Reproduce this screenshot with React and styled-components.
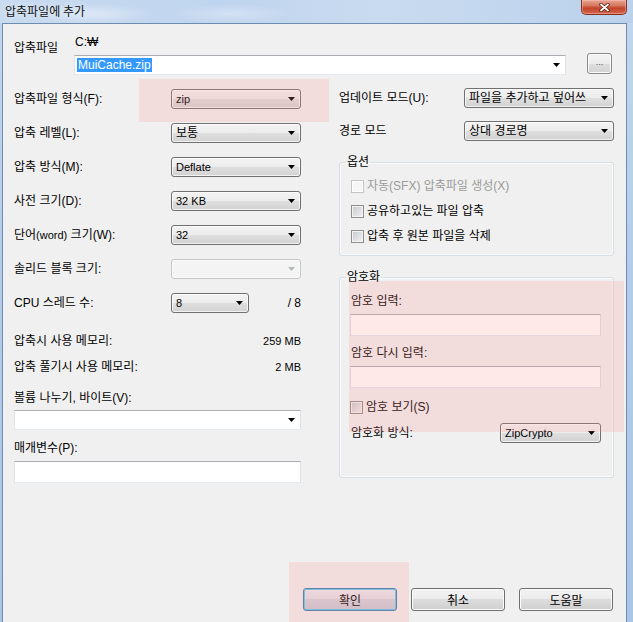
import React from 'react';
import styled, { createGlobalStyle } from 'styled-components';

const GlobalStyle = createGlobalStyle`
  html, body {
    margin: 0;
    padding: 0;
    overflow: hidden;
    background: #bcd3ee;
  }
`;

const uiFont = `"Liberation Sans", "Noto Sans CJK KR", sans-serif`;

const Window = styled.div`
  position: relative;
  width: 633px;
  height: 622px;
  overflow: hidden;
  display: flex;
  flex-direction: column;
  background: linear-gradient(to bottom, #c3d7ee 0%, #b4cdea 40%, #a9c5e7 100%);
  font-family: ${uiFont};
  font-size: 12px;
  line-height: 14px;
  color: #000;
`;

const TitleBar = styled.div`
  height: 23px;
  flex-shrink: 0;
  display: flex;
  align-items: flex-start;
  background:
    radial-gradient(ellipse 60px 10px at 95px 14px, rgba(230, 238, 248, 0.7), transparent),
    radial-gradient(ellipse 60px 10px at 230px 14px, rgba(225, 235, 247, 0.6), transparent),
    linear-gradient(to right, #c8dbf0 0%, #bfd4ee 35%, #c9dbf0 60%, #bbd2ec 100%);
`;

const Title = styled.div`
  margin: 4px 0 0 5px;
  font-family: "Noto Sans CJK KR", sans-serif;
  font-size: 12px;
  line-height: 14px;
  color: #111;
  text-shadow: 0 0 6px rgba(255, 255, 255, 0.95);
`;

const CloseButton = styled.div`
  margin-left: auto;
  margin-right: 6px;
  width: 46px;
  height: 15px;
  box-sizing: border-box;
  border: 1px solid #83301f;
  border-top: none;
  border-radius: 0 0 5px 5px;
  background: linear-gradient(#e8a592 0%, #d6785f 40%, #c3432a 58%, #d5664b 100%);
  box-shadow: inset 0 0 0 1px rgba(255, 200, 190, 0.45);
  display: flex;
  align-items: center;
  justify-content: center;
`;

const Client = styled.div`
  flex: 1;
  margin: 0 6px 0 2px;
  border: 1px solid #6f8db1;
  border-bottom: none;
  background: #f0f0f0;
  display: flex;
  flex-direction: column;
`;

const ArchiveRow = styled.div`
  display: flex;
  align-items: flex-start;
  padding: 11px 0 0 11px;
`;

const ArchiveLabel = styled.div`
  width: 60px;
  margin-top: 6px;
`;

const ArchivePath = styled.div`
  display: flex;
  flex-direction: column;
  gap: 6px;
  width: 492px;
`;

const PathText = styled.div`
  padding-left: 1px;
`;

const EditCombo = styled.div`
  box-sizing: border-box;
  width: ${p => p.$w}px;
  height: 20px;
  margin-top: ${p => p.$mt || 0}px;
  display: flex;
  align-items: center;
  padding: 0 5px 0 2px;
  background: #fff;
  border: 1px solid;
  border-color: #abadb3 #dbdfe6 #e3e9ef #e2e3ea;
`;

const Selected = styled.span`
  background: #3399ff;
  color: #fff;
  padding: 0 1px;
  line-height: 14px;
`;

const ArrowIcon = styled.svg`
  margin-left: auto;
  flex-shrink: 0;
`;

const BrowseButton = styled.div`
  margin: 18px 0 0 21px;
  width: 25px;
  height: 21px;
  box-sizing: border-box;
  border: 1px solid #8a8a8a;
  border-radius: 3px;
  background: linear-gradient(#f4f4f4 0%, #ececec 50%, #dedede 50%, #d3d3d3 100%);
  box-shadow: inset 0 0 0 1px #fbfbfb;
  display: flex;
  align-items: center;
  justify-content: center;
  font-size: 9px;
  color: #555;
  padding-bottom: 3px;
`;

const Columns = styled.div`
  display: flex;
  gap: 38px;
  padding: 13px 0 0 11px;
`;

const LeftColumn = styled.div`
  width: 287px;
  display: flex;
  flex-direction: column;
  padding-top: 1px;
`;

const RightColumn = styled.div`
  width: 275px;
  display: flex;
  flex-direction: column;
`;

const FieldRow = styled.div`
  display: flex;
  align-items: center;
  justify-content: ${p => (p.$spread ? 'space-between' : 'flex-start')};
  height: 20px;
  margin-top: ${p => p.$mt || 0}px;
`;

const FieldLabel = styled.div`
  width: ${p => p.$w}px;
  flex-shrink: 0;
  white-space: nowrap;
`;

const Small = styled.span`
  font-size: 11px;
`;

const DropCombo = styled.div`
  box-sizing: border-box;
  width: ${p => p.$w}px;
  height: 20px;
  margin-left: ${p => (p.$push ? 'auto' : '0')};
  display: flex;
  align-items: center;
  padding: 0 5px 0 4px;
  border: 1px solid ${p => (p.$disabled ? '#c2c6c9' : '#707070')};
  border-radius: 3px;
  background: ${p =>
    p.$disabled
      ? '#f4f4f4'
      : 'linear-gradient(#f3f3f3 0%, #ececec 50%, #dfdfdf 50%, #d2d2d2 100%)'};
  box-shadow: inset 0 0 0 1px ${p => (p.$disabled ? '#f9f9f9' : 'rgba(255,255,255,0.7)')};
  white-space: nowrap;
  overflow: hidden;
`;

const ComboText = styled.span`
  font-size: ${p => (p.$latin ? '11px' : '12px')};
`;

const Trailing = styled.div`
  margin-left: auto;
  padding-right: 0;
`;

const Caption = styled.div`
  margin-top: ${p => p.$mt || 0}px;
  padding-left: ${p => p.$indent || 0}px;
  white-space: nowrap;
`;

const TextBox = styled.div`
  box-sizing: border-box;
  width: ${p => (p.$w ? `${p.$w}px` : '100%')};
  height: 22px;
  margin-top: ${p => p.$mt || 0}px;
  background: #fff;
  border: 1px solid;
  border-color: #abadb3 #dbdfe6 #e3e9ef #e2e3ea;
`;

const GroupBox = styled.fieldset`
  margin: 14px 0 0;
  padding: 0;
  min-width: 0;
  box-sizing: border-box;
  width: 275px;
  border: 1px solid #d5dfe5;
  border-radius: 3px;
  box-shadow: inset 0 0 0 1px #fbfbfb;
`;

const Legend = styled.legend`
  margin-left: 6px;
  padding: 0 1px;
  font-size: 12px;
  line-height: 14px;
`;

const GroupBody = styled.div`
  display: flex;
  flex-direction: column;
  gap: ${p => p.$gap || 0}px;
  padding: ${p => p.$pad};
`;

const CheckRow = styled.div`
  display: flex;
  align-items: center;
  gap: 3px;
  height: 20px;
  margin-top: ${p => p.$mt || 0}px;
  color: ${p => (p.$disabled ? '#9a9a9a' : '#000')};
  white-space: nowrap;
`;

const CheckBox = styled.span`
  width: 13px;
  height: 13px;
  box-sizing: border-box;
  flex-shrink: 0;
  border: 1px solid ${p => (p.$disabled ? '#c4c4c4' : '#8e8f8f')};
  background: ${p =>
    p.$disabled ? '#f6f6f6' : 'linear-gradient(135deg, #c4c7cc 0%, #dfe0e2 55%, #f2f2f2 100%)'};
  box-shadow: inset 0 0 0 1px ${p => (p.$disabled ? '#ffffff' : '#f3f3f3')};
`;

const ButtonBar = styled.div`
  display: flex;
  justify-content: flex-end;
  gap: 14px;
  padding-right: 13px;
  margin-top: 105px;
`;

const DialogButton = styled.div`
  width: 94px;
  height: 23px;
  box-sizing: border-box;
  border: 1px solid ${p => (p.$default ? '#3c7fb1' : '#707070')};
  border-radius: 3px;
  background: ${p =>
    p.$default
      ? 'linear-gradient(#ececf1 0%, #e2e2ea 50%, #d3d3de 50%, #c9c9d6 100%)'
      : 'linear-gradient(#f3f3f3 0%, #ebebeb 50%, #dddddd 50%, #cfcfcf 100%)'};
  box-shadow: inset 0 0 0 1px ${p => (p.$default ? '#5ecff4' : '#fbfbfb')};
  display: flex;
  align-items: center;
  justify-content: center;
  font-family: "Noto Sans CJK KR", sans-serif;
`;

const Highlight = styled.div`
  position: absolute;
  left: ${p => p.$x}px;
  top: ${p => p.$y}px;
  width: ${p => p.$w}px;
  height: ${p => p.$h}px;
  background: rgba(250, 140, 140, 0.2);
  pointer-events: none;
`;

const Arrow = ({ disabled }) => (
  <ArrowIcon width="7" height="4" viewBox="0 0 7 4">
    <polygon points="0,0 7,0 3.5,4" fill={disabled ? '#b5b9bc' : '#000'} />
  </ArrowIcon>
);

const leftRows = [
  { label: '압축파일 형식(F):', value: 'zip', latin: true },
  { label: '압축 레벨(L):', value: '보통' },
  { label: '압축 방식(M):', value: 'Deflate', latin: true },
  { label: '사전 크기(D):', value: '32 KB', latin: true },
  { label: <>단어<Small>(word)</Small> 크기(W):</>, value: '32', latin: true },
  { label: '솔리드 블록 크기:', value: '', disabled: true },
];

const options = [
  { label: '자동(SFX) 압축파일 생성(X)', disabled: true },
  { label: '공유하고있는 파일 압축' },
  { label: '압축 후 원본 파일을 삭제' },
];

const highlights = [
  { x: 139, y: 79, w: 190, h: 43 },
  { x: 349, y: 281, w: 275, h: 151 },
  { x: 289, y: 562, w: 120, h: 60 },
];

export default function App() {
  return (
    <>
      <GlobalStyle />
      <Window>
        <TitleBar>
          <Title>압축파일에 추가</Title>
          <CloseButton>
            <svg width="11" height="9" viewBox="0 0 11 9">
              <path d="M2 1.5 L9 7.5 M9 1.5 L2 7.5" stroke="#5a1e14" strokeWidth="3.4" strokeLinecap="round" />
              <path d="M2 1.5 L9 7.5 M9 1.5 L2 7.5" stroke="#fff" strokeWidth="1.8" strokeLinecap="round" />
            </svg>
          </CloseButton>
        </TitleBar>

        <Client>
          <ArchiveRow>
            <ArchiveLabel>압축파일</ArchiveLabel>
            <ArchivePath>
              <PathText>C:₩</PathText>
              <EditCombo $w={492}>
                <Selected>MuiCache.zip</Selected>
                <Arrow />
              </EditCombo>
            </ArchivePath>
            <BrowseButton>...</BrowseButton>
          </ArchiveRow>

          <Columns>
            <LeftColumn>
              {leftRows.map((row, i) => (
                <FieldRow key={i} $mt={i === 0 ? 0 : 14}>
                  <FieldLabel $w={157}>{row.label}</FieldLabel>
                  <DropCombo $w={130} $disabled={row.disabled}>
                    <ComboText $latin={row.latin}>{row.value}</ComboText>
                    <Arrow disabled={row.disabled} />
                  </DropCombo>
                </FieldRow>
              ))}
              <FieldRow $mt={14}>
                <FieldLabel $w={157}>CPU 스레드 수:</FieldLabel>
                <DropCombo $w={78}>
                  <ComboText $latin>8</ComboText>
                  <Arrow />
                </DropCombo>
                <Trailing>/ 8</Trailing>
              </FieldRow>

              <FieldRow $mt={18} $spread>
                <span>압축시 사용 메모리:</span>
                <Small>259 MB</Small>
              </FieldRow>
              <FieldRow $mt={6} $spread>
                <span>압축 풀기시 사용 메모리:</span>
                <Small>2 MB</Small>
              </FieldRow>

              <Caption $mt={14}>볼륨 나누기, 바이트(V):</Caption>
              <EditCombo $w={287} $mt={5}>
                <Arrow />
              </EditCombo>
              <Caption $mt={11}>매개변수(P):</Caption>
              <TextBox $w={287} $mt={6} />
            </LeftColumn>

            <RightColumn>
              <FieldRow>
                <FieldLabel $w={125}>업데이트 모드(U):</FieldLabel>
                <DropCombo $w={150}>
                  <ComboText>파일을 추가하고 덮어쓰</ComboText>
                  <Arrow />
                </DropCombo>
              </FieldRow>
              <FieldRow $mt={13}>
                <FieldLabel $w={125}>경로 모드</FieldLabel>
                <DropCombo $w={150}>
                  <ComboText>상대 경로명</ComboText>
                  <Arrow />
                </DropCombo>
              </FieldRow>

              <GroupBox>
                <Legend>옵션</Legend>
                <GroupBody $gap={5} $pad="7px 10px 9px 11px">
                  {options.map(opt => (
                    <CheckRow key={opt.label} $disabled={opt.disabled}>
                      <CheckBox $disabled={opt.disabled} />
                      {opt.label}
                    </CheckRow>
                  ))}
                </GroupBody>
              </GroupBox>

              <GroupBox>
                <Legend>암호화</Legend>
                <GroupBody $pad="10px 12px 34px 10px">
                  <Caption $indent={1}>암호 입력:</Caption>
                  <TextBox $mt={6} />
                  <Caption $mt={10} $indent={1}>암호 다시 입력:</Caption>
                  <TextBox $mt={6} />
                  <CheckRow $mt={9}>
                    <CheckBox />
                    암호 보기(S)
                  </CheckRow>
                  <FieldRow $mt={6}>
                    <Caption $indent={1}>암호화 방식:</Caption>
                    <DropCombo $w={101} $push>
                      <ComboText $latin>ZipCrypto</ComboText>
                      <Arrow />
                    </DropCombo>
                  </FieldRow>
                </GroupBody>
              </GroupBox>
            </RightColumn>
          </Columns>

          <ButtonBar>
            <DialogButton $default>확인</DialogButton>
            <DialogButton>취소</DialogButton>
            <DialogButton>도움말</DialogButton>
          </ButtonBar>
        </Client>

        {highlights.map((h, i) => (
          <Highlight key={i} $x={h.x} $y={h.y} $w={h.w} $h={h.h} />
        ))}
      </Window>
    </>
  );
}
